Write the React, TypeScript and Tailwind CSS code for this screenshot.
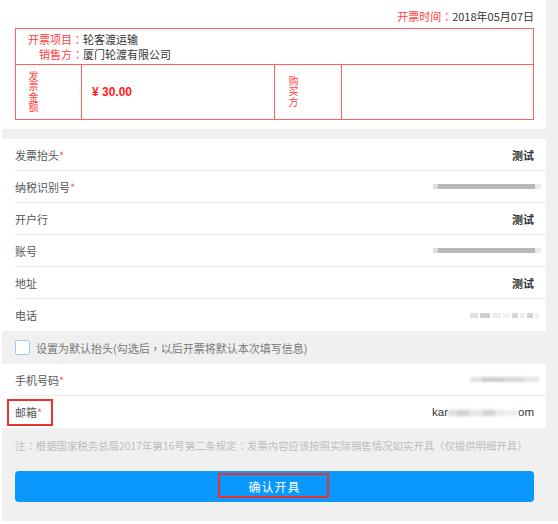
import React from 'react';

const font = "font-['Noto_Sans_CJK_SC','Noto_Sans',sans-serif]";
const tc = "font-['Noto_Sans_CJK_TC',sans-serif]";

// a blurred stand-in for masked values
const Blur = ({ className }: { className: string }) => <div className={`blur-[0.8px] ${className}`} />;

const Colon = () => <span className={tc}>：</span>;

const Row = ({ label, required, children, last }: { label: string; required?: boolean; children: React.ReactNode; last?: boolean }) => (
  <div className={`ml-[13px] pr-[12px] h-[32px] flex items-center justify-between ${last ? '' : 'border-b border-[#ebebeb]'}`}>
    <span className="text-[11px] leading-[14px] text-[#555]">
      {label}
      {required && <span className="text-[#ff5a5a]">*</span>}
    </span>
    {children}
  </div>
);

const Bold = () => <span className="text-[11px] leading-[14px] font-semibold text-[#333]">测试</span>;

const LongBar = () => (
  <div className="-mr-[7px] flex items-center blur-[0.7px]">
    <div className="w-[5px] h-[5px] bg-[#dedede]" />
    <div className="w-[97px] h-[5px] bg-[#b8b8b8]" />
    <div className="w-[6px] h-[5px] bg-[#ebebeb]" />
  </div>
);

export default function App() {
  return (
    <div className={`min-h-screen bg-white ${font}`}>
      <div className="relative ml-[2px] w-[556px] h-[521px] bg-[#f0f0f0]">
        {/* invoice head */}
        <div className="w-[544px] h-[129px] bg-white pt-[9px] pl-[13px] pr-[12px]">
          <div className="text-right text-[11px] leading-[14px] text-[#333]">
            <span className="text-[#ff4040]">开票时间<Colon /></span>2018年05月07日
          </div>
          <div className="mt-[5px] border border-[#ff6161]">
            <div className="h-[36px] border-b border-[#ff6161] pt-[2px] text-[11px] leading-[16px]">
              <div className="flex">
                <span className="w-[67px] pl-[11px] text-right text-[#ff4040]">开票项目<Colon /></span>
                <span className="text-[#333]">轮客渡运输</span>
              </div>
              <div className="flex -mt-[1px]">
                <span className="w-[67px] pl-[11px] text-right text-[#ff4040]">销售方<Colon /></span>
                <span className="text-[#333]">厦门轮渡有限公司</span>
              </div>
            </div>
            <div className="flex h-[54px]">
              <div className="w-[66px] border-r border-[#ff6161] pl-[10px] flex items-center">
                <span className="[writing-mode:vertical-lr] text-[10px] leading-[14px] tracking-[0.5px] text-[#ff4040]">发票金额</span>
              </div>
              <div className="w-[193px] border-r border-[#ff6161] pl-[10px] flex items-center">
                <span className="font-['Liberation_Sans',sans-serif] font-bold text-[12px] text-[#ff1a1a]">¥ 30.00</span>
              </div>
              <div className="w-[67px] border-r border-[#ff6161] pl-[11px] flex items-center">
                <span className="[writing-mode:vertical-lr] text-[10px] leading-[14px] tracking-[0.5px] text-[#ff4040]">购买方</span>
              </div>
              <div className="flex-1" />
            </div>
          </div>
        </div>

        {/* buyer info */}
        <div className="mt-[10px] w-[544px] bg-white">
          <Row label="发票抬头" required>
            <Bold />
          </Row>
          <Row label="纳税识别号" required>
            <LongBar />
          </Row>
          <Row label="开户行">
            <Bold />
          </Row>
          <Row label="账号">
            <LongBar />
          </Row>
          <Row label="地址">
            <Bold />
          </Row>
          <Row label="电话" last>
            <div className="-mr-[5px] flex items-center gap-[2px] blur-[0.7px]">
              <div className="w-[8px] h-[5px] bg-[#e2e2e2]" />
              <div className="w-[10px] h-[5px] bg-[#cfcfcf]" />
              <div className="w-[9px] h-[5px] bg-[#ececec]" />
              <div className="w-[7px] h-[5px] bg-[#f2f2f2]" />
              <div className="w-[6px] h-[5px] bg-[#d6d6d6]" />
              <div className="w-[5px] h-[5px] bg-[#ededed]" />
              <div className="w-[6px] h-[5px] bg-[#d2d2d2]" />
              <div className="w-[4px] h-[5px] bg-[#efefef]" />
            </div>
          </Row>
        </div>

        <div className="h-[33px] pl-[13px] flex items-center gap-[6px]">
          <div className="w-[15px] h-[15px] bg-white border border-[#9fcaf2] rounded-[2px]" />
          <span className="text-[11px] leading-[14px] text-[#777]">
            设置为默认抬头(勾选后<span className={tc}>，</span>以后开票将默认本次填写信息)
          </span>
        </div>

        <div className="w-[544px] bg-white">
          <Row label="手机号码" required>
            <div className="-mr-[5px] flex items-center blur-[0.8px]">
              <div className="w-[12px] h-[5px] bg-[#e4e4e4]" />
              <div className="w-[22px] h-[5px] bg-[#cdcdcd]" />
              <div className="w-[20px] h-[5px] bg-[#d8d8d8]" />
              <div className="w-[15px] h-[5px] bg-[#e6e6e6]" />
            </div>
          </Row>
          <Row label="邮箱" required last>
            <div className="flex items-center text-[11.5px] leading-[14px] text-[#333] font-['Liberation_Sans',sans-serif]">
              <span>kar</span>
              <div className="flex items-center blur-[0.8px] mt-[2px]">
                <Blur className="w-[8px] h-[6px] bg-[#dcdcdc]" />
                <Blur className="w-[14px] h-[6px] bg-[#cfcfcf]" />
                <Blur className="w-[12px] h-[6px] bg-[#e3e3e3]" />
                <Blur className="w-[14px] h-[6px] bg-[#d0d0d0]" />
                <Blur className="w-[10px] h-[6px] bg-[#e8e8e8]" />
                <Blur className="w-[12px] h-[6px] bg-[#ececec]" />
              </div>
              <span>om</span>
            </div>
          </Row>
        </div>

        <div className={`mt-[11px] pl-[13px] text-[10.4px] leading-[14px] text-[#bdbdbd] whitespace-nowrap`}>
          注<span className={tc}>：</span>根据国家税务总局2017年第16号第二条规定<span className={tc}>：</span>发票内容应该按照实际销售情况如实开具<span className={tc}>（</span>仅提供明细开具<span className={tc}>）</span>
        </div>

        <button className="mt-[18px] ml-[13px] w-[519px] h-[31px] rounded-[4px] bg-[#0b98fd] text-white text-[12px] tracking-[1px] flex items-center justify-center">
          确认开具
        </button>

        {/* annotation boxes */}
        <div className="absolute left-[5px] top-[399px] w-[46px] h-[27px] border-2 border-[#e8332f]" />
        <div className="absolute left-[216px] top-[473px] w-[111px] h-[25px] border-2 border-[#e8332f]" />
      </div>
    </div>
  );
}
